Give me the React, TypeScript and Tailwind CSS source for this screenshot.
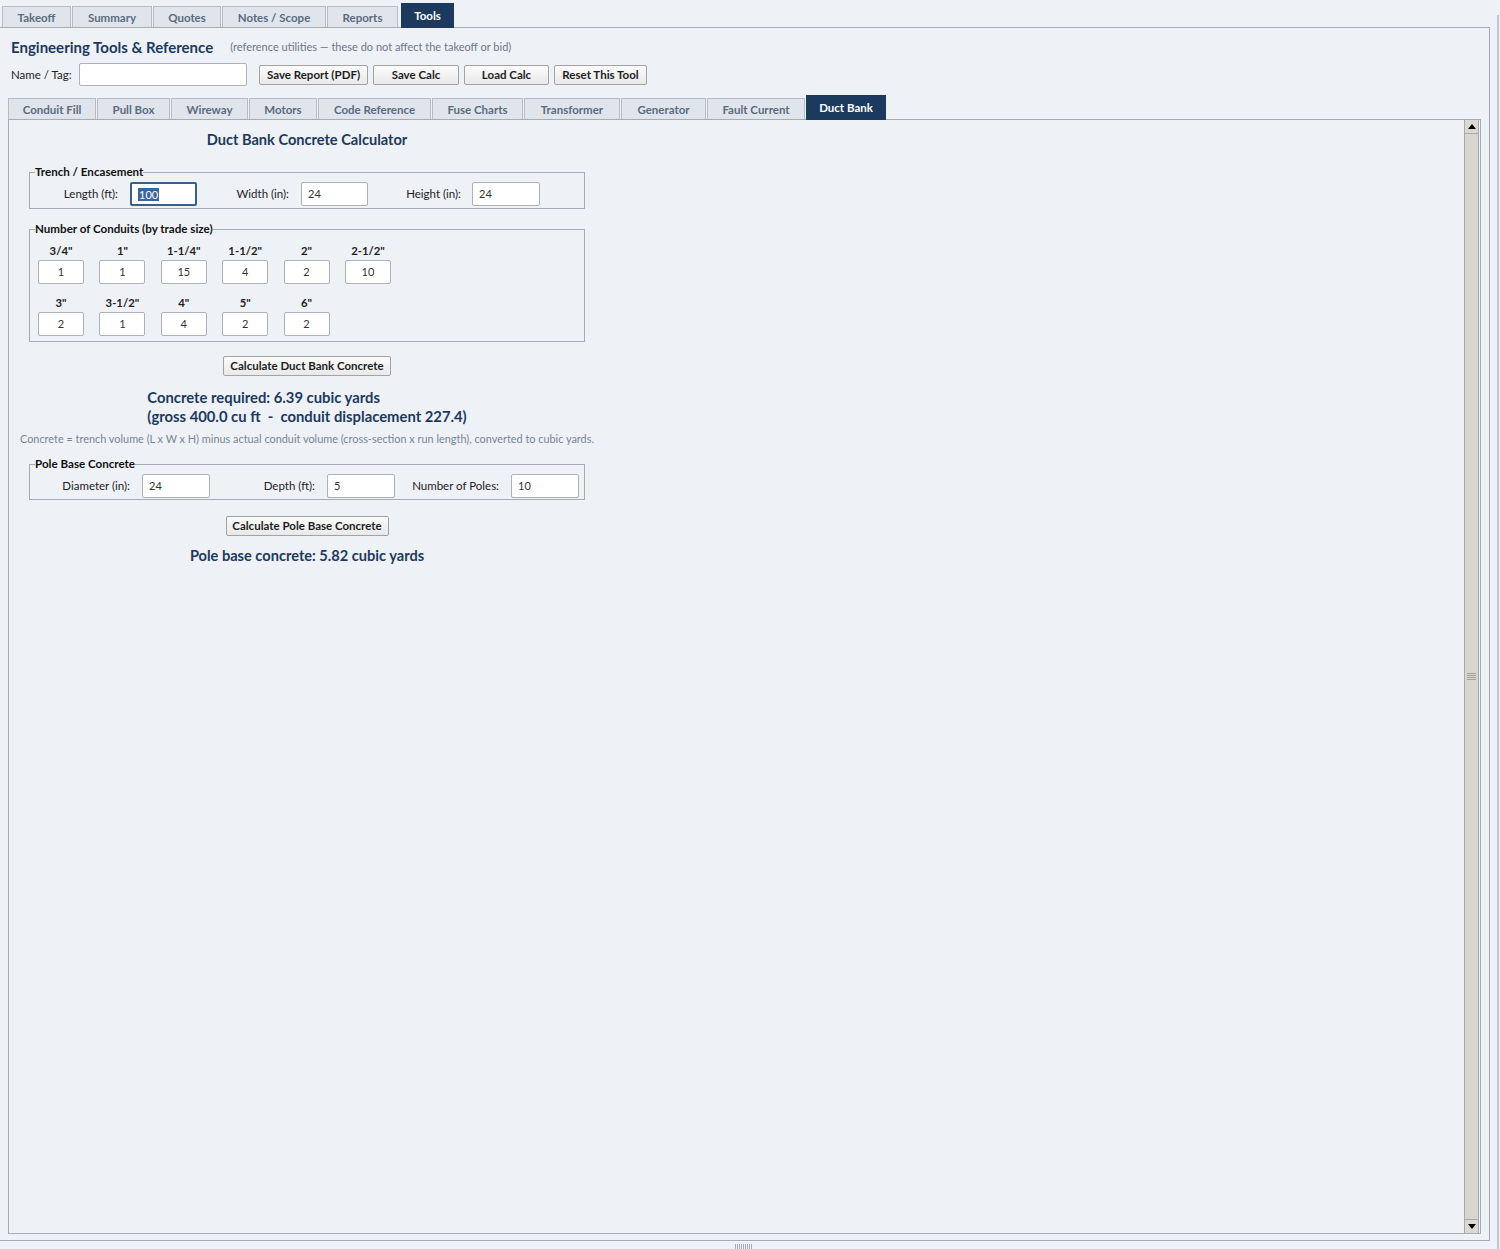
import React from "react";

const NAVY = "bg-[#1b3a5e]";

function TopTab({ label, w, active }: { label: string; w: string; active?: boolean }) {
  if (active) {
    return (
      <div
        className={`${w} h-[25px] mb-[-1px] ${NAVY} border border-[#1b3a5e] text-white text-[11.5px] font-bold flex items-center justify-center relative z-10`}
      >
        {label}
      </div>
    );
  }
  return (
    <div
      className={`${w} h-[21px] bg-[#e0e5ec] border border-[#b7bdc5] border-b-0 text-[#5b6b7e] text-[11.5px] font-bold flex items-center justify-center pt-px`}
    >
      {label}
    </div>
  );
}

function Btn({ label, w }: { label: string; w: string }) {
  return (
    <div
      className={`${w} h-[20px] border border-[#a3a3a3] rounded-[2px] bg-gradient-to-b from-[#fbfbfb] to-[#e9e9e9] text-[11.5px] font-bold text-[#1e1e1e] flex items-center justify-center whitespace-nowrap`}
    >
      {label}
    </div>
  );
}

function Input({ value, w, center, focus, h }: { value: string; w: string; center?: boolean; focus?: boolean; h?: string }) {
  return (
    <div
      className={`${w} ${h ?? "h-[24px]"} bg-white rounded-[2px] text-[11px] text-[#333] flex items-center ${
        center ? "justify-center" : "pl-[6px]"
      } ${focus ? "border-[2px] border-[#34618f] pl-[5px]" : "border border-[#adb2b9]"}`}
    >
      {focus ? <span className="bg-[#3a64a0] text-white leading-[13px] px-[1px]">{value}</span> : value}
    </div>
  );
}

function Legend({ children }: { children: React.ReactNode }) {
  return (
    <legend className="ml-[5px] px-0 text-[11.6px] font-bold text-[#111] leading-[14px]">{children}</legend>
  );
}

const LBL = "text-right text-[11.5px] text-[#222] whitespace-nowrap";

export default function App() {
  const row1 = [
    ["3/4\"", "1"],
    ["1\"", "1"],
    ["1-1/4\"", "15"],
    ["1-1/2\"", "4"],
    ["2\"", "2"],
    ["2-1/2\"", "10"],
  ];
  const row2 = [
    ["3\"", "2"],
    ["3-1/2\"", "1"],
    ["4\"", "4"],
    ["5\"", "2"],
    ["6\"", "2"],
  ];
  return (
    <div className="w-[1500px] h-[1249px] bg-[#eef1f6] relative overflow-hidden font-['Lato','Open_Sans',sans-serif]">
      {/* top tabs */}
      <div className="h-[27px] flex items-end pl-[2px] gap-px">
        <TopTab label="Takeoff" w="w-[69px]" />
        <TopTab label="Summary" w="w-[80px]" />
        <TopTab label="Quotes" w="w-[68px]" />
        <TopTab label="Notes / Scope" w="w-[104px]" />
        <TopTab label="Reports" w="w-[71px]" />
        <div className="w-px" />
        <TopTab label="Tools" w="w-[53px]" active />
      </div>

      {/* outer panel */}
      <div className="w-[1490px] h-[1214px] border-t border-r border-b border-[#a7acb3] flex flex-col">
        {/* header */}
        <div className="flex items-center h-[18px] mt-[10px] pl-[11px]">
          <div className="text-[15px] font-bold text-[#1b3a5e] leading-[18px] whitespace-nowrap">Engineering Tools &amp; Reference</div>
          <div className="ml-[17px] text-[11px] text-[#6c7888] whitespace-nowrap">
            (reference utilities — these do not affect the takeoff or bid)
          </div>
        </div>

        {/* name row */}
        <div className="flex items-center h-[23px] mt-[7px] pl-[11px]">
          <div className="text-[11.5px] text-[#222] w-[68px] whitespace-nowrap">Name / Tag:</div>
          <div className="w-[168px] h-[23px] bg-white border border-[#adb2b9] rounded-[2px]" />
          <div className="w-[12px]" />
          <div className="flex gap-[5px]">
            <Btn label="Save Report (PDF)" w="w-[109px]" />
            <Btn label="Save Calc" w="w-[86px]" />
            <Btn label="Load Calc" w="w-[85px]" />
            <Btn label="Reset This Tool" w="w-[93px]" />
          </div>
        </div>

        {/* sub tabs */}
        <div className="flex items-end h-[23px] mt-[10px] pl-[8px] gap-px">
          <TopTab label="Conduit Fill" w="w-[88px]" />
          <TopTab label="Pull Box" w="w-[73px]" />
          <TopTab label="Wireway" w="w-[77px]" />
          <TopTab label="Motors" w="w-[68px]" />
          <TopTab label="Code Reference" w="w-[113px]" />
          <TopTab label="Fuse Charts" w="w-[91px]" />
          <TopTab label="Transformer" w="w-[96px]" />
          <TopTab label="Generator" w="w-[85px]" />
          <TopTab label="Fault Current" w="w-[98px]" />
          <TopTab label="Duct Bank" w="w-[80px]" active />
        </div>

        {/* inner panel */}
        <div className="ml-[8px] w-[1473px] h-[1115px] border border-[#a7acb3] flex">
          <div className="flex-1">
            <div className="ml-[11px] w-[574px] pt-[11px] flex flex-col">
              <div className="text-center text-[14.6px] font-bold text-[#1b3a5e] leading-[18px]">
                Duct Bank Concrete Calculator
              </div>

              {/* trench */}
              <fieldset className="mt-[16px] ml-[9px] w-[556px] border border-[#a7acb3] px-0 pb-[2px]">
                <Legend>Trench / Encasement</Legend>
                <div className="flex items-center pt-[3px]">
                  <div className={`w-[88px] ${LBL}`}>Length (ft):</div>
                  <div className="w-[12px]" />
                  <Input value="100" w="w-[67px]" focus />
                  <div className={`w-[92px] ${LBL}`}>Width (in):</div>
                  <div className="w-[12px]" />
                  <Input value="24" w="w-[67px]" />
                  <div className={`w-[93px] ${LBL}`}>Height (in):</div>
                  <div className="w-[11px]" />
                  <Input value="24" w="w-[68px]" />
                </div>
              </fieldset>

              {/* conduits */}
              <fieldset className="mt-[13px] ml-[9px] w-[556px] border border-[#a7acb3] px-0 pb-[5px]">
                <Legend>Number of Conduits (by trade size)</Legend>
                <div className="pl-[8px] pt-[8px] flex flex-col">
                  <div className="grid grid-cols-[repeat(6,46px)] gap-x-[15.4px]">
                    {row1.map(([l]) => (
                      <div key={l} className="text-center text-[11.3px] font-bold text-[#222] leading-[14px]">{l}</div>
                    ))}
                  </div>
                  <div className="grid grid-cols-[repeat(6,46px)] gap-x-[15.4px] mt-[2px]">
                    {row1.map(([l, v]) => (
                      <Input key={l} value={v} w="w-[46px]" center />
                    ))}
                  </div>
                  <div className="grid grid-cols-[repeat(6,46px)] gap-x-[15.4px] mt-[12px]">
                    {row2.map(([l]) => (
                      <div key={l} className="text-center text-[11.3px] font-bold text-[#222] leading-[14px]">{l}</div>
                    ))}
                  </div>
                  <div className="grid grid-cols-[repeat(6,46px)] gap-x-[15.4px] mt-[2px]">
                    {row2.map(([l, v]) => (
                      <Input key={l} value={v} w="w-[46px]" center />
                    ))}
                  </div>
                </div>
              </fieldset>

              <div className="mt-[14px] flex justify-center">
                <Btn label="Calculate Duct Bank Concrete" w="w-[168px]" />
              </div>

              <div className="mt-[12px] flex justify-center">
                <div className="text-left text-[14.8px] font-bold text-[#1b3a5e] leading-[19px]">
                  <div>Concrete required: 6.39 cubic yards</div>
                  <div className="whitespace-pre">(gross 400.0 cu ft  -  conduit displacement 227.4)</div>
                </div>
              </div>

              <div className="mt-[6px] text-center text-[10.9px] text-[#7a8594] leading-[13px] whitespace-nowrap">
                Concrete = trench volume (L x W x H) minus actual conduit volume (cross-section x run length), converted to cubic yards.
              </div>

              {/* pole base */}
              <fieldset className="mt-[12px] ml-[9px] w-[556px] border border-[#a7acb3] px-0 pb-[1px]">
                <Legend>Pole Base Concrete</Legend>
                <div className="flex items-center pt-[3px]">
                  <div className={`w-[100px] ${LBL}`}>Diameter (in):</div>
                  <div className="w-[12px]" />
                  <Input value="24" w="w-[68px]" h="h-[24px]" />
                  <div className={`w-[105px] ${LBL}`}>Depth (ft):</div>
                  <div className="w-[12px]" />
                  <Input value="5" w="w-[68px]" />
                  <div className={`w-[104px] ${LBL}`}>Number of Poles:</div>
                  <div className="w-[12px]" />
                  <Input value="10" w="w-[68px]" />
                </div>
              </fieldset>

              <div className="mt-[16px] flex justify-center">
                <Btn label="Calculate Pole Base Concrete" w="w-[163px]" />
              </div>

              <div className="mt-[10px] text-center text-[14.6px] font-bold text-[#1b3a5e] leading-[19px]">
                Pole base concrete: 5.82 cubic yards
              </div>
            </div>
          </div>

          {/* scrollbar */}
          <div className="w-[15px] mr-px flex flex-col bg-[#d9d6cf] border-l border-r border-[#a9a9a9]">
            <div className="h-[14px] border-b border-[#a9a9a9] bg-[#dcd9d2] flex items-center justify-center">
              <svg width="8" height="5" viewBox="0 0 8 5">
                <path d="M0 5 L4 0 L8 5 Z" fill="#000" />
              </svg>
            </div>
            <div className="flex-1 flex items-center justify-center">
              <div className="w-[9px] flex flex-col gap-[1px]">
                <div className="h-px bg-[#a4a19b]" />
                <div className="h-px bg-[#a4a19b]" />
                <div className="h-px bg-[#a4a19b]" />
                <div className="h-px bg-[#a4a19b]" />
              </div>
            </div>
            <div className="h-[14px] border-t border-[#a9a9a9] bg-[#dcd9d2] flex items-center justify-center">
              <svg width="8" height="5" viewBox="0 0 8 5">
                <path d="M0 0 L4 5 L8 0 Z" fill="#000" />
              </svg>
            </div>
          </div>
        </div>
      </div>

      {/* window edge */}
      <div className="absolute top-[15px] bottom-0 left-[1497px] w-[2px] bg-[#c3c7cd]" />
      {/* bottom grip */}
      <div className="absolute left-[735px] top-[1244px] w-[18px] h-[5px] flex gap-px">
        {[0, 1, 2, 3, 4, 5, 6, 7, 8].map((i) => (
          <div key={i} className="w-px h-full bg-[#a8acb2]" />
        ))}
      </div>
    </div>
  );
}
